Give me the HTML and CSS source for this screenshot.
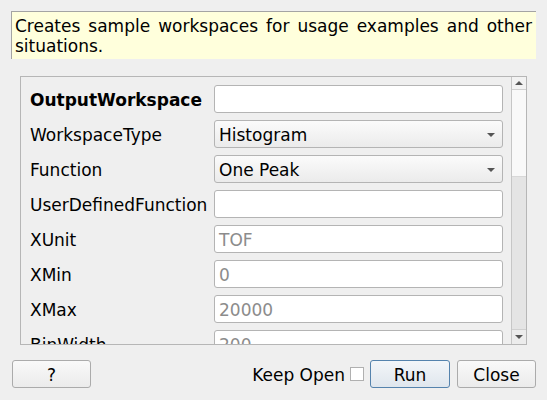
FILE: index.html
```html
<!DOCTYPE html>
<html>
<head>
<meta charset="utf-8">
<link rel="stylesheet" href="styles.css">
</head>
<body>
<div class="dialog">
  <div class="desc">Creates sample workspaces for usage examples and other situations.</div>
  <div class="frame">
    <div class="viewport">
      <div class="row"><span class="label bold">OutputWorkspace</span><div class="field"></div></div>
      <div class="row"><span class="label">WorkspaceType</span><div class="field combo"><span>Histogram</span><span class="arrow"></span></div></div>
      <div class="row"><span class="label">Function</span><div class="field combo"><span>One Peak</span><span class="arrow"></span></div></div>
      <div class="row"><span class="label">UserDefinedFunction</span><div class="field"></div></div>
      <div class="row"><span class="label">XUnit</span><div class="field ph">TOF</div></div>
      <div class="row"><span class="label">XMin</span><div class="field ph">0</div></div>
      <div class="row"><span class="label">XMax</span><div class="field ph">20000</div></div>
      <div class="row"><span class="label">BinWidth</span><div class="field ph">200</div></div>
      <div class="row"><span class="label">NumEvents</span><div class="field ph">1000</div></div>
    </div>
    <div class="scrollbar">
      <div class="sb-btn up"><span class="tri-up"></span></div>
      <div class="sb-handle"></div>
      <div class="sb-track"></div>
      <div class="sb-btn down"><span class="tri-down"></span></div>
    </div>
  </div>
  <div class="buttons">
    <div class="btn help">?</div>
    <div class="spacer"></div>
    <span class="keep">Keep Open</span>
    <span class="check"></span>
    <div class="btn run">Run</div>
    <div class="btn close">Close</div>
  </div>
</div>
</body>
</html>
```
FILE: styles.css
```css
html, body {
  margin: 0;
  background: #efefef;
  font-family: "DejaVu Sans", sans-serif;
  font-size: 17px;
  color: #000;
}
.dialog {
  padding: 11px;
}
.desc {
  height: 48px;
  box-sizing: border-box;
  background: #ffffdc;
  border-top: 1px solid #a4a4a4;
  border-left: 1px solid #a4a4a4;
  padding: 4px 4px 0 3px;
  line-height: 20px;
  text-align: justify;
}
.frame {
  margin: 17px 9px 0;
  height: 269px;
  box-sizing: border-box;
  border: 1px solid #b6b6b6;
  display: flex;
}
.viewport {
  flex: 1;
  overflow: hidden;
  padding: 8px 8px 0 9px;
}
.row {
  display: flex;
  align-items: center;
  height: 28px;
  margin-bottom: 7px;
  line-height: 20px;
}
.label {
  width: 184px;
  flex: none;
  white-space: nowrap;
  margin-top: 1px;
}
.bold {
  font-weight: bold;
}
.field {
  flex: 1;
  height: 28px;
  box-sizing: border-box;
  border: 1px solid #b4b4b4;
  border-radius: 3px;
  background: #fff;
  padding: 1px 4px 0;
  display: flex;
  align-items: center;
}
.ph {
  color: #8c8c8c;
}
.combo {
  background: linear-gradient(#fbfbfb, #ebebeb);
  justify-content: space-between;
  padding-right: 7px;
}
.arrow {
  width: 0;
  height: 0;
  border-left: 4px solid transparent;
  border-right: 4px solid transparent;
  border-top: 4px solid #555;
}
.scrollbar {
  width: 14px;
  border-left: 1px solid #c6c6c6;
  display: flex;
  flex-direction: column;
  flex: none;
}
.sb-btn {
  display: flex;
  align-items: center;
  justify-content: center;
  background: #f2f2f2;
}
.sb-btn.up {
  height: 12px;
  border-bottom: 1px solid #d0d0d0;
}
.sb-btn.down {
  height: 14px;
  border-top: 1px solid #d0d0d0;
  background: #ececec;
}
.tri-up {
  width: 0;
  height: 0;
  border-left: 4px solid transparent;
  border-right: 4px solid transparent;
  border-bottom: 4px solid #555;
}
.tri-down {
  width: 0;
  height: 0;
  border-left: 4px solid transparent;
  border-right: 4px solid transparent;
  border-top: 4px solid #555;
}
.sb-handle {
  height: 86px;
  background: #f9f9f9;
  border-bottom: 1px solid #d8d8d8;
}
.sb-track {
  flex: 1;
  background: #e4e4e4;
}
.buttons {
  display: flex;
  align-items: center;
  margin-top: 15px;
  height: 28px;
  line-height: 20px;
}
.btn {
  height: 28px;
  box-sizing: border-box;
  border: 1px solid #ababab;
  border-radius: 3px;
  background: linear-gradient(#f9f9f9, #ebebeb);
  display: flex;
  align-items: center;
  justify-content: center;
  padding-top: 1px;
}
.help {
  width: 79px;
  margin-left: 1px;
}
.spacer {
  flex: 1;
}
.keep {
  white-space: nowrap;
  margin-top: 1px;
}
.check {
  width: 14px;
  height: 14px;
  box-sizing: border-box;
  border: 1px solid #b0b0b0;
  background: #fff;
  margin-left: 5px;
}
.run {
  width: 80px;
  margin-left: 6px;
  border-color: #5583ad;
  background: linear-gradient(#f3f6f9, #dfe6ed);
}
.close {
  width: 79px;
  margin-left: 7px;
}
```
